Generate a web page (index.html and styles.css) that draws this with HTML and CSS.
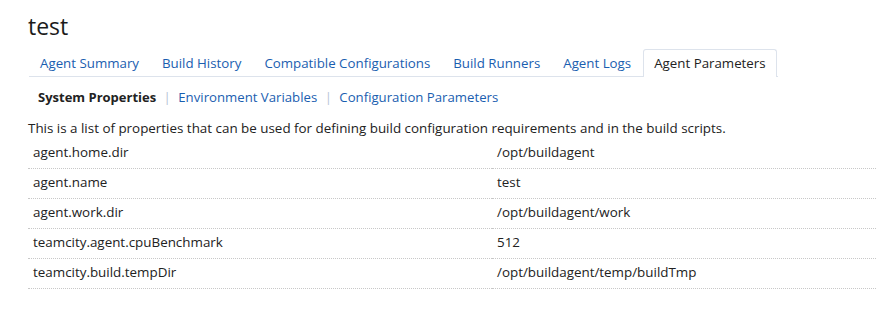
FILE: index.html
```html
<!DOCTYPE html>
<html lang="en">
<head>
    <meta charset="UTF-8">
    <title>Agent Parameters</title>
    <link rel="stylesheet" href="styles.css">
</head>
<body>
    <div class="page">
        <h1 class="agentName">test</h1>
        <ul class="tabs">
            <li><a href="#">Agent Summary</a></li>
            <li><a href="#">Build History</a></li>
            <li><a href="#">Compatible Configurations</a></li>
            <li><a href="#">Build Runners</a></li>
            <li><a href="#">Agent Logs</a></li>
            <li class="selected"><a href="#">Agent Parameters</a></li>
        </ul>
        <div class="subTabs">
            <span class="current">System Properties</span>
            <span class="sep">|</span>
            <a href="#">Environment Variables</a>
            <span class="sep">|</span>
            <a href="#">Configuration Parameters</a>
        </div>
        <p class="note">This is a list of properties that can be used for defining build configuration requirements and in the build scripts.</p>
        <table class="params">
            <tr><td class="name">agent.home.dir</td><td>/opt/buildagent</td></tr>
            <tr><td class="name">agent.name</td><td>test</td></tr>
            <tr><td class="name">agent.work.dir</td><td>/opt/buildagent/work</td></tr>
            <tr><td class="name">teamcity.agent.cpuBenchmark</td><td>512</td></tr>
            <tr><td class="name">teamcity.build.tempDir</td><td>/opt/buildagent/temp/buildTmp</td></tr>
        </table>
    </div>
</body>
</html>
```

FILE: styles.css
```css
body
{
    margin: 0;
    background: #fff;
    color: #222;
    font-family: "Open Sans", "Noto Sans", sans-serif;
    font-size: 13.4px;
}
.page
{
    padding: 10px 0 0 28px;
}
.agentName
{
    margin: 0;
    font-size: 23px;
    font-weight: normal;
    line-height: 32px;
    color: #1b1b1b;
}
.tabs
{
    display: flex;
    width: fit-content;
    list-style: none;
    margin: 7px 0 0 1px;
    padding: 0;
    border-bottom: 1px solid #dde3ec;
    font-size: 13.3px;
}
.tabs li
{
    height: 26px;
    line-height: 26px;
    padding: 0 10px;
    margin-right: 1px;
    border: 1px solid transparent;
    border-bottom: none;
    border-radius: 3px 3px 0 0;
    margin-bottom: -1px;
}
.tabs li a
{
    color: #1a5eb0;
    text-decoration: none;
}
.tabs li.selected
{
    background: #fff;
    border-color: #dde3ec;
    height: 27px;
}
.tabs li.selected a
{
    color: #222;
}
.subTabs
{
    margin: 11px 0 0 10px;
    line-height: 18px;
    font-size: 13.2px;
}
.subTabs a
{
    color: #1a5eb0;
    text-decoration: none;
}
.subTabs .current
{
    font-weight: bold;
    font-size: 13px;
}
.subTabs .sep
{
    color: #b6c3d6;
    margin: 0 4px;
}
.note
{
    margin: 13px 0 0;
    line-height: 18px;
}
.params
{
    width: 100%;
    border-collapse: collapse;
    margin-top: 2px;
}
.params td
{
    height: 26px;
    padding: 0 5px 3px;
    border-bottom: 1px dotted #c8c8c8;
    vertical-align: middle;
}
.params td.name
{
    width: 454px;
}
```
